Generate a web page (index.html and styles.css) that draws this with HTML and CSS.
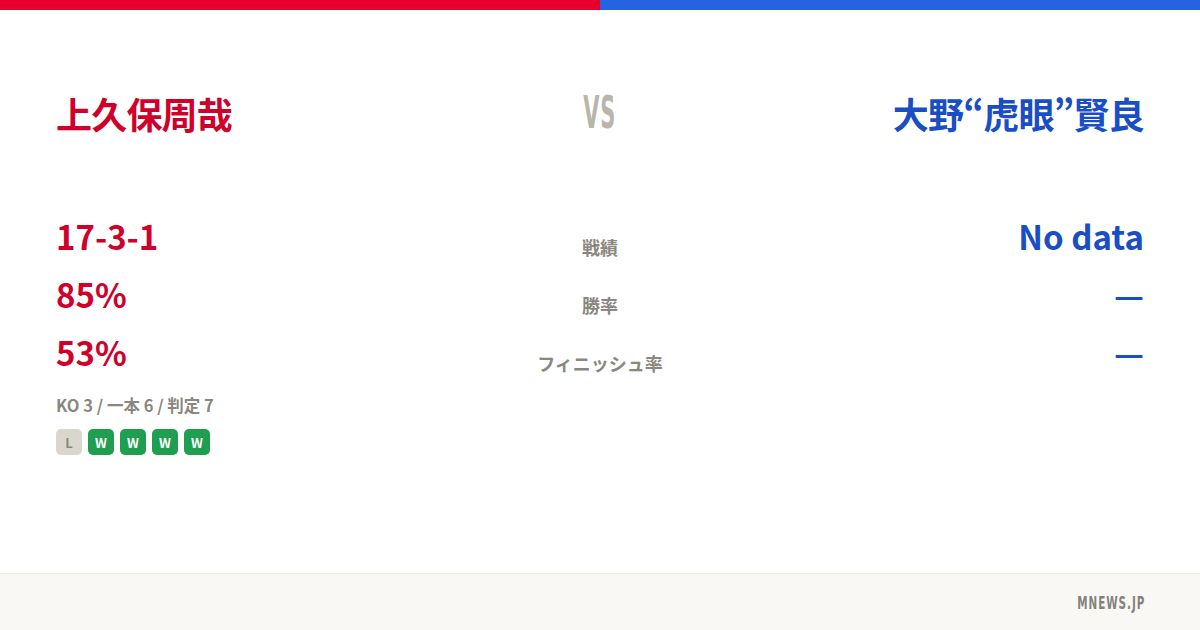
FILE: index.html
```html
<!DOCTYPE html>
<html lang="ja">
<head>
<meta charset="utf-8">
<link rel="stylesheet" href="styles.css">
</head>
<body>
<div class="page">
  <div class="topbar"><div class="bar-red"></div><div class="bar-blue"></div></div>
  <main class="main">
    <div class="names">
      <div class="name name-red">上久保周哉</div>
      <div class="vs">VS</div>
      <div class="name name-blue">大野“虎眼”賢良</div>
    </div>
    <div class="stats">
      <div class="row">
        <div class="val red">17-3-1</div>
        <div class="label">戦績</div>
        <div class="val blue right">No data</div>
      </div>
      <div class="row">
        <div class="val red">85%</div>
        <div class="label">勝率</div>
        <div class="val blue right">—</div>
      </div>
      <div class="row">
        <div class="val red">53%</div>
        <div class="label">フィニッシュ率</div>
        <div class="val blue right">—</div>
      </div>
    </div>
    <div class="detail">KO 3 / 一本 6 / 判定 7</div>
    <div class="form">
      <span class="badge loss">L</span>
      <span class="badge win">W</span>
      <span class="badge win">W</span>
      <span class="badge win">W</span>
      <span class="badge win">W</span>
    </div>
  </main>
  <footer class="footer"><span class="brand">MNEWS.JP</span></footer>
</div>
</body>
</html>
```

FILE: styles.css
```css
* { box-sizing: border-box; }
html, body { margin: 0; padding: 0; }
body {
  width: 1200px;
  height: 630px;
  background: #ffffff;
  font-family: "Noto Sans CJK JP", "Noto Sans", sans-serif;
  overflow: hidden;
}
.page {
  width: 1200px;
  height: 630px;
  display: flex;
  flex-direction: column;
}
.topbar {
  height: 10px;
  display: flex;
  flex: none;
}
.bar-red { flex: 1; background: #e8002d; }
.bar-blue { flex: 1; background: #2563e0; }
.main {
  flex: 1;
  padding: 0 56px;
}
.names {
  display: grid;
  grid-template-columns: 1fr auto 1fr;
  align-items: center;
  margin-top: 80px;
  height: 46px;
}
.name {
  font-size: 36px;
  font-weight: 700;
  line-height: 46px;
  letter-spacing: -0.8px;
}
.name-red { color: #cf0029; }
.name-blue { color: #1a4ec4; text-align: right; }
.vs {
  font-family: "DejaVu Sans Condensed", "DejaVu Sans", sans-serif;
  font-weight: 700;
  font-size: 44px;
  line-height: 46px;
  color: #b8b5ab;
  transform: scaleX(0.53);
  letter-spacing: 1px;
  margin-top: 0;
}
.stats {
  margin-top: 71px;
  display: flex;
  flex-direction: column;
}
.row {
  display: grid;
  grid-template-columns: 1fr auto 1fr;
  align-items: start;
  height: 58px;
}
.val {
  font-size: 33px;
  font-weight: 700;
  line-height: 58px;
}
.red { color: #cf0029; }
.blue { color: #1a4ec4; }
.right { text-align: right; }
.label {
  font-size: 18px;
  font-weight: 700;
  color: #8a877e;
  text-align: center;
  line-height: 26px;
  padding-top: 27px;
}
.detail {
  margin-top: 13px;
  font-size: 16.5px;
  font-weight: 700;
  color: #8a877e;
  line-height: 22px;
}
.form {
  display: flex;
  gap: 6px;
  margin-top: 13px;
}
.badge {
  width: 26px;
  height: 26px;
  border-radius: 5px;
  display: flex;
  align-items: center;
  justify-content: center;
  font-size: 13px;
  font-weight: 700;
}
.loss { background: #dad6cd; color: #8a877e; }
.win { background: #1f9e4f; color: #ffffff; }
.footer {
  flex: none;
  height: 57px;
  background: #f9f8f5;
  border-top: 1px solid #ebe9e4;
  display: flex;
  align-items: center;
  justify-content: flex-end;
  padding: 0 56px;
}
.brand {
  font-family: "DejaVu Sans Condensed", "DejaVu Sans", sans-serif;
  font-weight: 700;
  font-size: 18px;
  color: #85827a;
  letter-spacing: 1.5px;
  margin-right: -1.5px;
  transform: scaleX(0.64);
  transform-origin: right center;
}
```
